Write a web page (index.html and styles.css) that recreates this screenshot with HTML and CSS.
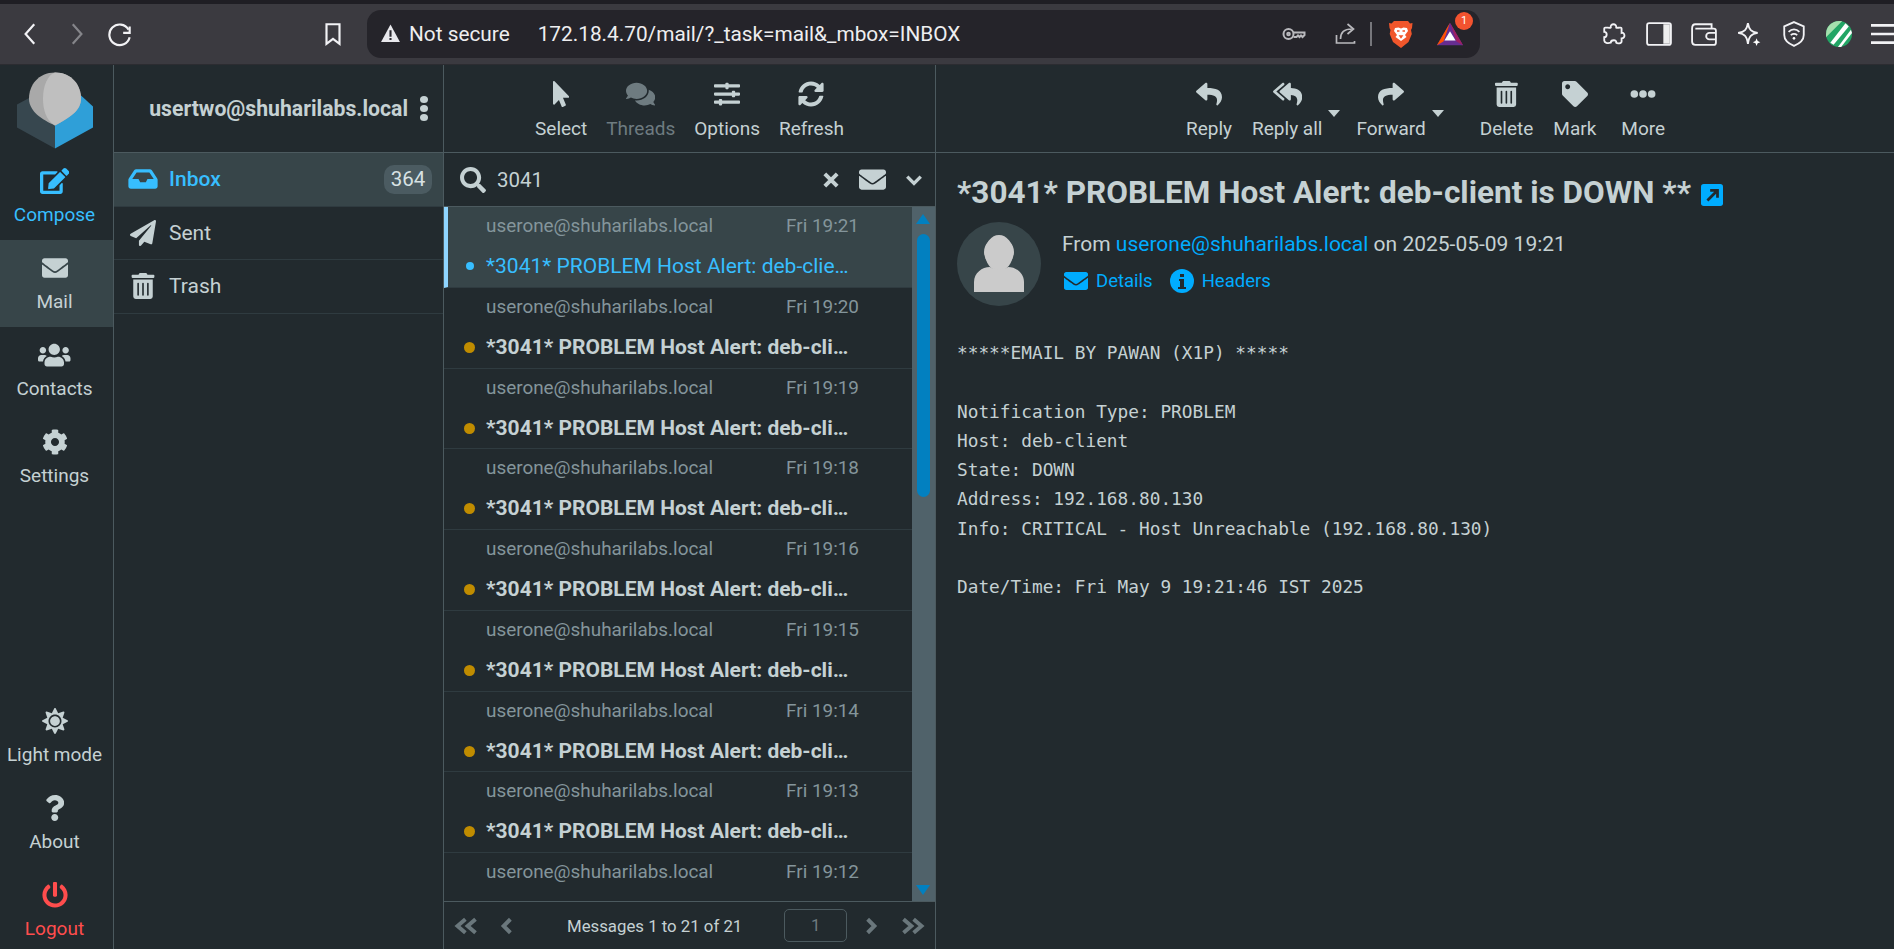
FILE: index.html
```html
<!DOCTYPE html>
<html>
<head>
  <meta charset="utf-8">
  <title>Roundcube Webmail :: *3041* PROBLEM Host Alert: deb-client is DOWN **</title>
  <link rel="stylesheet" href="styles.css">
</head>
<body>
  <svg class="defs" width="0" height="0">
    <defs>
      <path id="i-edit" d="M402.6 83.2l90.2 90.2c3.8 3.8 3.8 10 0 13.8L274.4 405.6l-92.8 10.3c-12.4 1.4-22.9-9.1-21.5-21.5l10.3-92.8L388.8 83.2c3.8-3.8 10-3.8 13.8 0zm162-22.9l-48.8-48.8c-15.2-15.2-39.9-15.2-55.2 0l-35.4 35.4c-3.8 3.8-3.8 10 0 13.8l90.2 90.2c3.8 3.8 10 3.8 13.8 0l35.4-35.4c15.2-15.3 15.2-40 0-55.2zM384 346.2V448H64V128h229.8c3.2 0 6.2-1.3 8.5-3.5l40-40c7.6-7.6 2.2-20.5-8.5-20.5H48C21.5 64 0 85.5 0 112v352c0 26.5 21.5 48 48 48h352c26.5 0 48-21.5 48-48V306.2c0-10.7-12.9-16-20.5-8.5l-40 40c-2.2 2.3-3.5 5.3-3.5 8.5z"/>
      <path id="i-env" d="M502.3 190.8c3.9-3.1 9.7-.2 9.7 4.7V400c0 26.5-21.5 48-48 48H48c-26.5 0-48-21.5-48-48V195.6c0-5 5.7-7.8 9.7-4.7 22.4 17.4 52.1 39.5 154.1 113.6 21.1 15.4 56.7 47.8 92.2 47.6 35.7.3 72-32.8 92.3-47.6 102-74.1 131.6-96.3 154-113.7zM256 320c23.2.4 56.6-29.2 73.4-41.4 132.7-96.3 142.8-104.7 173.4-128.7 5.8-4.5 9.2-11.5 9.2-18.9v-19c0-26.5-21.5-48-48-48H48C21.5 64 0 85.5 0 112v19c0 7.4 3.4 14.3 9.2 18.9 30.6 23.9 40.7 32.4 173.4 128.7 16.8 12.2 50.2 41.8 73.4 41.4z"/>
      <path id="i-users" d="M96 224c35.3 0 64-28.7 64-64s-28.7-64-64-64-64 28.7-64 64 28.7 64 64 64zm448 0c35.3 0 64-28.7 64-64s-28.7-64-64-64-64 28.7-64 64 28.7 64 64 64zm32 32h-64c-17.6 0-33.5 7.1-45.1 18.6 40.3 22.1 68.9 62 75.1 109.4h66c17.7 0 32-14.3 32-32v-32c0-35.3-28.7-64-64-64zm-256 0c61.9 0 112-50.1 112-112S381.9 32 320 32 208 82.1 208 144s50.1 112 112 112zm76.8 32h-8.3c-20.8 10-43.9 16-68.5 16s-47.6-6-68.5-16h-8.3C179.6 288 128 339.6 128 403.2V432c0 26.5 21.5 48 48 48h288c26.5 0 48-21.5 48-48v-28.8c0-63.6-51.6-115.2-115.2-115.2zm-223.7-13.4C161.5 263.1 145.6 256 128 256H64c-35.3 0-64 28.7-64 64v32c0 17.7 14.3 32 32 32h65.9c6.3-47.4 34.9-87.3 75.2-109.4z"/>
      <path id="i-cog" d="M487.4 315.7l-42.6-24.6c4.3-23.2 4.3-47 0-70.2l42.6-24.6c4.9-2.8 7.1-8.6 5.5-14-11.1-35.6-30-67.8-54.7-94.6-3.8-4.1-10-5.1-14.8-2.3L380.8 110c-17.9-15.4-38.5-27.3-60.8-35.1V25.8c0-5.6-3.9-10.5-9.4-11.7-36.7-8.2-74.3-7.8-109.2 0-5.5 1.2-9.4 6.1-9.4 11.7V75c-22.2 7.9-42.8 19.8-60.8 35.1L88.7 85.5c-4.9-2.8-11-1.9-14.8 2.3-24.7 26.7-43.6 58.9-54.7 94.6-1.7 5.4.6 11.2 5.5 14L67.3 221c-4.3 23.2-4.3 47 0 70.2l-42.6 24.6c-4.9 2.8-7.1 8.6-5.5 14 11.1 35.6 30 67.8 54.7 94.6 3.8 4.1 10 5.1 14.8 2.3l42.6-24.6c17.9 15.4 38.5 27.3 60.8 35.1v49.2c0 5.6 3.9 10.5 9.4 11.7 36.7 8.2 74.3 7.8 109.2 0 5.5-1.2 9.4-6.1 9.4-11.7v-49.2c22.2-7.9 42.8-19.8 60.8-35.1l42.6 24.6c4.9 2.8 11 1.9 14.8-2.3 24.7-26.7 43.6-58.9 54.7-94.6 1.5-5.5-.7-11.3-5.6-14.1zM256 336c-44.1 0-80-35.9-80-80s35.9-80 80-80 80 35.9 80 80-35.9 80-80 80z"/>
      <path id="i-sun" d="M256 160c-52.9 0-96 43.1-96 96s43.1 96 96 96 96-43.1 96-96-43.1-96-96-96zm246.4 80.5l-94.7-47.3 33.5-100.4c4.5-13.6-8.4-26.5-21.9-21.9l-100.4 33.5-47.4-94.8c-6.4-12.8-24.6-12.8-31 0l-47.3 94.7L92.7 70.8c-13.6-4.5-26.5 8.4-21.9 21.9l33.5 100.4-94.7 47.4c-12.8 6.4-12.8 24.6 0 31l94.7 47.3-33.5 100.5c-4.5 13.6 8.4 26.5 21.9 21.9l100.4-33.5 47.3 94.7c6.4 12.8 24.6 12.8 31 0l47.3-94.7 100.4 33.5c13.6 4.5 26.5-8.4 21.9-21.9l-33.5-100.4 94.7-47.3c13-6.5 13-24.7.2-31.1zm-155.9 106c-49.9 49.9-131.1 49.9-181 0-49.9-49.9-49.9-131.1 0-181 49.9-49.9 131.1-49.9 181 0 49.9 49.9 49.9 131.1 0 181z"/>
      <path id="i-question" d="M202.021 0C122.202 0 70.503 32.703 29.914 91.026c-7.363 10.58-5.093 25.086 5.178 32.874l43.138 32.709c10.373 7.865 25.132 6.026 33.253-4.148 25.049-31.381 43.63-49.449 82.757-49.449 30.764 0 68.816 19.799 68.816 49.631 0 22.552-18.617 34.134-48.993 51.164-35.423 19.86-82.299 44.576-82.299 106.405V320c0 13.255 10.745 24 24 24h72.471c13.255 0 24-10.745 24-24v-5.773c0-42.86 125.268-44.645 125.268-160.627C377.504 66.256 286.902 0 202.021 0zM192 373.459c-38.196 0-69.271 31.075-69.271 69.271 0 38.195 31.075 69.27 69.271 69.27s69.271-31.075 69.271-69.271-31.075-69.27-69.271-69.27z"/>
      <path id="i-power" d="M400 54.1c63 45 104 118.6 104 201.9 0 136.8-110.8 247.7-247.5 248C120 504.3 8.2 393 8 256.4 7.9 173.1 48.9 99.3 111.8 54.2c11.7-8.3 28-4.8 35 7.7L162.6 90c5.9 10.5 3.1 23.8-6.6 31-41.5 30.8-68 79.6-68 134.9-.1 92.3 74.5 168.1 168 168.1 91.6 0 168.6-74.2 168-169.1-.3-51.8-24.7-101.8-68.1-134-9.7-7.2-12.4-20.5-6.5-30.9l15.8-28.1c7-12.4 23.2-16.1 34.8-7.8zM296 264V24c0-13.3-10.7-24-24-24h-32c-13.3 0-24 10.7-24 24v240c0 13.3 10.7 24 24 24h32c13.3 0 24-10.7 24-24z"/>
      <path id="i-inbox" d="M567.938 243.908L462.25 85.374A48.003 48.003 0 0 0 422.311 64H153.689a48 48 0 0 0-39.938 21.374L8.062 243.908A47.994 47.994 0 0 0 0 270.533V400c0 26.51 21.49 48 48 48h480c26.51 0 48-21.49 48-48V270.533a47.994 47.994 0 0 0-8.062-26.625zM162.252 128h251.497l85.333 128H376l-32 64H232l-32-64H76.918l85.334-128z"/>
      <path id="i-plane" d="M476 3.2L12.5 270.6c-18.1 10.4-15.8 35.6 2.2 43.2L121 358.4l287.3-253.2c5.5-4.9 13.3 2.6 8.6 8.3L176 407v80.5c0 23.6 28.5 32.9 42.5 15.8L282 426l124.6 52.2c14.2 6 30.4-2.9 33-18.2l72-432C515 7.8 493.3-6.8 476 3.2z"/>
      <path id="i-trash" d="M32 464a48 48 0 0 0 48 48h288a48 48 0 0 0 48-48V128H32zm272-256a16 16 0 0 1 32 0v224a16 16 0 0 1-32 0zm-96 0a16 16 0 0 1 32 0v224a16 16 0 0 1-32 0zm-96 0a16 16 0 0 1 32 0v224a16 16 0 0 1-32 0zM432 32H312l-9.4-18.7A24 24 0 0 0 281.1 0H166.8a23.72 23.72 0 0 0-21.4 13.3L136 32H16A16 16 0 0 0 0 48v32a16 16 0 0 0 16 16h416a16 16 0 0 0 16-16V48a16 16 0 0 0-16-16z"/>
      <path id="i-pointer" d="M302.189 329.126H196.105l55.831 135.993c3.889 9.428-.555 19.999-9.444 23.999l-49.165 21.427c-9.165 4-19.443-.571-23.332-9.714l-53.053-129.136-86.664 89.138C18.729 472.71 0 463.554 0 447.977V18.299C0 1.899 19.921-6.096 30.277 5.443l284.412 292.542c11.472 11.179 3.007 31.141-12.5 31.141z"/>
      <path id="i-comments" d="M416 192c0-88.4-93.1-160-208-160S0 103.6 0 192c0 34.3 14.1 65.9 38 92-13.4 30.2-35.5 54.2-35.8 54.5-2.2 2.3-2.8 5.7-1.5 8.7S4.8 352 8 352c36.6 0 66.9-12.3 88.7-25 32.2 15.7 70.3 25 111.3 25 114.9 0 208-71.6 208-160zm122 220c23.9-26 38-57.7 38-92 0-66.9-53.5-124.2-129.3-148.1.9 6.6 1.3 13.3 1.3 20.1 0 105.9-107.7 192-240 192-10.8 0-21.3-.8-31.7-1.9C207.8 439.6 281.8 480 368 480c41 0 79.1-9.2 111.3-25 21.8 12.7 52.1 25 88.7 25 3.2 0 6.1-1.9 7.3-4.8 1.3-2.9.7-6.3-1.5-8.7-.3-.3-22.4-24.2-35.8-54.5z"/>
      <path id="i-sliders" d="M496 384H160v-16c0-8.8-7.2-16-16-16h-32c-8.8 0-16 7.2-16 16v16H16c-8.8 0-16 7.2-16 16v32c0 8.8 7.2 16 16 16h80v16c0 8.8 7.2 16 16 16h32c8.8 0 16-7.2 16-16v-16h336c8.8 0 16-7.2 16-16v-32c0-8.8-7.2-16-16-16zm0-160h-80v-16c0-8.8-7.2-16-16-16h-32c-8.8 0-16 7.2-16 16v16H16c-8.8 0-16 7.2-16 16v32c0 8.8 7.2 16 16 16h336v16c0 8.8 7.2 16 16 16h32c8.8 0 16-7.2 16-16v-16h80c8.8 0 16-7.2 16-16v-32c0-8.8-7.2-16-16-16zm0-160H288V48c0-8.8-7.2-16-16-16h-32c-8.8 0-16 7.2-16 16v16H16C7.2 64 0 71.2 0 80v32c0 8.8 7.2 16 16 16h208v16c0 8.8 7.2 16 16 16h32c8.8 0 16-7.2 16-16v-16h208c8.8 0 16-7.2 16-16V80c0-8.8-7.2-16-16-16z"/>
      <path id="i-sync" d="M370.72 133.28C339.458 104.008 298.888 87.962 255.848 88c-77.458.068-144.328 53.178-162.791 126.85-1.344 5.363-6.122 9.15-11.651 9.15H24.103c-7.498 0-13.194-6.807-11.807-14.176C33.933 94.924 134.813 8 256 8c66.448 0 126.791 26.136 171.315 68.685L463.03 40.97C478.149 25.851 504 36.559 504 57.941V192c0 13.255-10.745 24-24 24H345.941c-21.382 0-32.09-25.851-16.971-40.971l41.75-41.749zM32 296h134.059c21.382 0 32.09 25.851 16.971 40.971l-41.75 41.75c31.262 29.273 71.835 45.319 114.876 45.28 77.418-.07 144.315-53.144 162.787-126.849 1.344-5.363 6.122-9.15 11.651-9.15h57.304c7.498 0 13.194 6.807 11.807 14.176C478.067 417.076 377.187 504 256 504c-66.448 0-126.791-26.136-171.315-68.685L48.97 471.03C33.851 486.149 8 475.441 8 454.059V320c0-13.255 10.745-24 24-24z"/>
      <path id="i-reply" d="M8.309 189.836L184.313 37.851C199.719 24.546 224 35.347 224 56.015v80.053c160.629 1.839 288 34.032 288 186.258 0 61.441-39.581 122.309-83.333 154.132-13.653 9.931-33.111-2.533-28.077-18.631 45.344-145.012-21.507-183.51-176.59-185.742V360c0 20.7-24.3 31.453-39.687 18.164l-176.004-152c-11.071-9.562-11.086-26.753 0-36.328z"/>
      <path id="i-replyall" d="M136.309 189.836L312.313 37.851C327.72 24.546 352 35.348 352 56.015v82.763c129.182 10.231 224 52.212 224 183.548 0 61.441-39.582 122.309-83.333 154.132-13.653 9.931-33.111-2.533-28.077-18.631 38.512-123.162-3.922-169.482-112.59-182.015V360c0 20.7-24.3 31.453-39.687 18.164l-176.004-152c-11.071-9.562-11.086-26.753 0-36.328zM8.309 226.164l176.004 152c15.387 13.289 39.687 2.536 39.687-18.164v-15.581L66.4 208 224 71.6V56.015c0-20.667-24.281-31.469-39.687-18.164L8.309 189.836c-11.086 9.575-11.071 26.766 0 36.328z"/>
      <path id="i-tag" d="M0 252.118V48C0 21.49 21.49 0 48 0h204.118a48 48 0 0 1 33.941 14.059l211.882 211.882c18.745 18.745 18.745 49.137 0 67.882L293.823 497.941c-18.745 18.745-49.137 18.745-67.882 0L14.059 286.059A48 48 0 0 1 0 252.118zM112 64c-26.51 0-48 21.49-48 48s21.49 48 48 48 48-21.49 48-48-21.49-48-48-48z"/>
      <path id="i-search" d="M505 442.7L405.3 343c-4.5-4.5-10.6-7-17-7H372c27.6-35.3 44-79.7 44-128C416 93.1 322.9 0 208 0S0 93.1 0 208s93.1 208 208 208c48.3 0 92.7-16.4 128-44v16.3c0 6.4 2.5 12.5 7 17l99.7 99.7c9.4 9.4 24.6 9.4 33.9 0l28.3-28.3c9.4-9.4 9.4-24.6.1-34zM208 336c-70.7 0-128-57.2-128-128 0-70.7 57.2-128 128-128 70.7 0 128 57.2 128 128 0 70.7-57.2 128-128 128z"/>
    </defs>
  </svg>

  <header class="browser">
    <div class="browser-bar">
      <div class="nav-arrows">
        <svg class="bi" viewBox="0 0 24 24"><path d="M15 3L7 12l8 9"/></svg>
        <svg class="bi dim" viewBox="0 0 24 24"><path d="M9 3l8 9-8 9"/></svg>
        <svg class="bi" viewBox="0 0 24 24"><path d="M19 8a9.500 9.500 0 1 0 1 7"/><path d="M20 5v6h-6" class="thin"/></svg>
      </div>
      <svg class="bi bookmark" viewBox="0 0 24 24"><path d="M6 3h12v18l-6-4.500L6 21z"/></svg>
      <div class="address">
        <svg class="warn" viewBox="0 0 20 20"><path d="M10 1.500l9 16.500H1z" fill="#e8e8ec"/><path d="M9 7h2v6H9zM9 14.200h2v2H9z" fill="#2a292f"/></svg>
        <span class="not-secure">Not secure</span>
        <span class="url">172.18.4.70/mail/?_task=mail&amp;_mbox=INBOX</span>
        <div class="address-end">
          <svg class="bi small key" viewBox="0 0 24 24"><circle cx="7" cy="12" r="5"/><circle cx="7" cy="12" r="1.300"/><path d="M12 10.500h11v2.500l-2 2-1.500-1.500-1.500 1.500-1.500-1.500-1.500 1.500H12"/></svg>
          <svg class="bi small share" viewBox="0 0 24 24"><path d="M2 13v8h18v-2M6 17c0-7 4-10 11-10M13 2l6 5-6 5"/></svg>
          <span class="addr-sep"></span>
          <svg class="brave" viewBox="0 0 24 28"><path d="M5 1h14l2 2.500 2.500-.5-.5 5-1 2 .8 4-3.300 8L12 28 4 22l-3.300-8 .8-4-1-2L0 3l2.500.5z" fill="#f1562b"/><path d="M6 8l3.500-.5L12 8.500l2.500-1L18 8l1 3-3 4 1.500 2L12 21l-5.500-4L8 15l-3-4z" fill="#fff"/><path d="M8 11h2.500M13.500 11H16M11 16h2l-1 1.500z" stroke="#f1562b" stroke-width="1.500" fill="#f1562b"/></svg>
          <div class="bat">
            <svg viewBox="0 0 30 28"><path d="M15 2l14 24H1z" fill="#662d91"/><path d="M15 2L1 26l7-4z" fill="#ff5000"/><path d="M15 2l14 24-7-4z" fill="#9e1f63"/><path d="M15 11l6 10H9z" fill="#fff"/></svg>
            <span class="bat-badge">1</span>
          </div>
        </div>
      </div>
      <div class="extensions">
        <svg class="bi ext" viewBox="0 0 24 24"><path d="M9 6c-1-4 6-4 5 0 0 1 5-1 5 1v4c3-1 4 5 0 5v3c0 2-4 2-5 1 1-3-5-3-5 0-3 1-6 0-6-2v-3c3 0 3-5 0-5V7c0-2 5 0 6-1z"/></svg>
        <svg class="bi ext" viewBox="0 0 24 24"><rect x="1" y="2" width="22" height="20" rx="2"/><path d="M16 3h6v18h-6z" fill="#eee" stroke="none"/></svg>
        <svg class="bi ext" viewBox="0 0 24 24"><path d="M1 7c0-2 1-4 3-4h15v4M1 7v12c0 2 1 3 3 3h17c1 0 2-1 2-2V9c0-1-1-2-2-2H4M23 11h-6a3 3 0 0 0 0 6h6"/></svg>
        <svg class="bi ext" viewBox="0 0 24 24"><path d="M11 2c1 6 3 8 9 9-6 1-8 3-9 10-1-7-3-9-9-10 6-1 8-3 9-9z"/><path d="M19 16l1 2.500 2.500 1-2.500 1-1 2.500-1-2.500-2.500-1 2.500-1z" fill="#fff" stroke="none"/></svg>
        <svg class="bi ext" viewBox="0 0 24 24"><path d="M12 1l9 4v8c0 5-4 8-9 10-5-2-9-5-9-10V5z"/><path d="M7 10c3-3 7-3 10 0M9 13c2-1.500 4-1.500 6 0" stroke-width="1.600"/><circle cx="12" cy="16" r="1.200" fill="#fff" stroke="none"/></svg>
        <svg class="ext" viewBox="0 0 24 24"><circle cx="12" cy="12" r="12" fill="#22a565"/><path d="M0 12A12 12 0 0 1 12 0h3L0 15z" fill="#a5e0ae"/><path d="M18 2L4 20l3 2L21 5z" fill="#fff"/><path d="M23 8L11 24h3L24 11z" fill="#fff"/></svg>
        <svg class="bi ext menu" viewBox="0 0 24 24"><path d="M0 4h24M0 12h24M0 20h24"/></svg>
      </div>
    </div>
  </header>

  <main class="app">
    <nav class="side">
      <svg class="logo" viewBox="0 0 113 87">
        <path d="M17 39l26-14 12 35v23L17 62z" fill="#37474f"/>
        <path d="M55 60l26-30 12 11v21L55 83z" fill="#2f9fd8"/>
        <path d="M55 7c17 0 26 13 26 26 0 12-11 19-26 27-13-6-26-14-26-27C29 20 38 7 55 7z" fill="#a9a9a9"/>
        <path d="M55 7c17 0 26 13 26 26 0 12-11 19-26 27-9-5-12-16-12-27C43 20 48 9 55 7z" fill="#bfbfbf"/>
      </svg>
      <a class="side-item compose"><svg class="ic" viewBox="0 0 576 512"><use href="#i-edit"/></svg><span>Compose</span></a>
      <a class="side-item current"><svg class="ic" viewBox="0 0 512 512"><use href="#i-env"/></svg><span>Mail</span></a>
      <a class="side-item"><svg class="ic" viewBox="0 0 640 512"><use href="#i-users"/></svg><span>Contacts</span></a>
      <a class="side-item"><svg class="ic" viewBox="0 0 512 512"><use href="#i-cog"/></svg><span>Settings</span></a>
      <div class="side-bottom">
        <a class="side-item"><svg class="ic" viewBox="0 0 512 512"><use href="#i-sun"/></svg><span>Light mode</span></a>
        <a class="side-item"><svg class="ic" viewBox="0 0 384 512"><use href="#i-question"/></svg><span>About</span></a>
        <a class="side-item logout"><svg class="ic" viewBox="0 0 512 512"><use href="#i-power"/></svg><span>Logout</span></a>
      </div>
    </nav>

    <section class="folders">
      <div class="account">
        <span class="account-name">usertwo@shuharilabs.local</span>
        <span class="kebab"><i></i><i></i><i></i></span>
      </div>
      <ul class="folder-list">
        <li class="folder selected"><svg class="ic" viewBox="0 0 576 512"><use href="#i-inbox"/></svg><span class="folder-name">Inbox</span><span class="count">364</span></li>
        <li class="folder"><svg class="ic" viewBox="0 0 512 512"><use href="#i-plane"/></svg><span class="folder-name">Sent</span></li>
        <li class="folder"><svg class="ic" viewBox="0 0 448 512"><use href="#i-trash"/></svg><span class="folder-name">Trash</span></li>
      </ul>
    </section>

    <section class="messages">
      <div class="toolbar list-toolbar">
        <a class="tbtn"><svg class="ic" viewBox="0 0 320 512"><use href="#i-pointer"/></svg><span>Select</span></a>
        <a class="tbtn disabled"><svg class="ic" viewBox="0 0 576 512"><use href="#i-comments"/></svg><span>Threads</span></a>
        <a class="tbtn"><svg class="ic" viewBox="0 0 512 512"><use href="#i-sliders"/></svg><span>Options</span></a>
        <a class="tbtn"><svg class="ic" viewBox="0 0 512 512"><use href="#i-sync"/></svg><span>Refresh</span></a>
      </div>
      <div class="searchbar">
        <svg class="ic search-ic" viewBox="0 0 512 512"><use href="#i-search"/></svg>
        <span class="search-text">3041</span>
        <svg class="bi x-ic" viewBox="0 0 16 16"><path d="M2.500 2.500l11 11M13.500 2.500l-11 11"/></svg>
        <svg class="ic env-ic" viewBox="0 0 512 512"><use href="#i-env"/></svg>
        <svg class="bi chev-ic" viewBox="0 0 16 16"><path d="M2 5l6 6 6-6"/></svg>
      </div>
      <div class="list-wrap">
        <ul class="list">
          <li class="msg selected"><div class="msg-top"><span class="sender">userone@shuharilabs.local</span><span class="date">Fri 19:21</span></div><div class="msg-sub"><i class="dot small-dot"></i><span class="subject">*3041* PROBLEM Host Alert: deb-clie…</span></div></li>
          <li class="msg unread"><div class="msg-top"><span class="sender">userone@shuharilabs.local</span><span class="date">Fri 19:20</span></div><div class="msg-sub"><i class="dot"></i><span class="subject">*3041* PROBLEM Host Alert: deb-cli…</span></div></li>
          <li class="msg unread"><div class="msg-top"><span class="sender">userone@shuharilabs.local</span><span class="date">Fri 19:19</span></div><div class="msg-sub"><i class="dot"></i><span class="subject">*3041* PROBLEM Host Alert: deb-cli…</span></div></li>
          <li class="msg unread"><div class="msg-top"><span class="sender">userone@shuharilabs.local</span><span class="date">Fri 19:18</span></div><div class="msg-sub"><i class="dot"></i><span class="subject">*3041* PROBLEM Host Alert: deb-cli…</span></div></li>
          <li class="msg unread"><div class="msg-top"><span class="sender">userone@shuharilabs.local</span><span class="date">Fri 19:16</span></div><div class="msg-sub"><i class="dot"></i><span class="subject">*3041* PROBLEM Host Alert: deb-cli…</span></div></li>
          <li class="msg unread"><div class="msg-top"><span class="sender">userone@shuharilabs.local</span><span class="date">Fri 19:15</span></div><div class="msg-sub"><i class="dot"></i><span class="subject">*3041* PROBLEM Host Alert: deb-cli…</span></div></li>
          <li class="msg unread"><div class="msg-top"><span class="sender">userone@shuharilabs.local</span><span class="date">Fri 19:14</span></div><div class="msg-sub"><i class="dot"></i><span class="subject">*3041* PROBLEM Host Alert: deb-cli…</span></div></li>
          <li class="msg unread"><div class="msg-top"><span class="sender">userone@shuharilabs.local</span><span class="date">Fri 19:13</span></div><div class="msg-sub"><i class="dot"></i><span class="subject">*3041* PROBLEM Host Alert: deb-cli…</span></div></li>
          <li class="msg unread"><div class="msg-top"><span class="sender">userone@shuharilabs.local</span><span class="date">Fri 19:12</span></div></li>
        </ul>
        <div class="scroll">
          <span class="arrow-up"></span>
          <span class="thumb"></span>
          <span class="arrow-down"></span>
        </div>
      </div>
      <div class="pager">
        <svg class="bi pg first" viewBox="0 0 24 16"><path d="M11 2L4 8l7 6M20 2l-7 6 7 6"/></svg>
        <svg class="bi pg prev" viewBox="0 0 12 16"><path d="M9 2L3 8l6 6"/></svg>
        <span class="pager-text">Messages 1 to 21 of 21</span>
        <span class="page-input">1</span>
        <svg class="bi pg next" viewBox="0 0 12 16"><path d="M3 2l6 6-6 6"/></svg>
        <svg class="bi pg last" viewBox="0 0 24 16"><path d="M4 2l7 6-7 6M13 2l7 6-7 6"/></svg>
      </div>
    </section>

    <section class="reader">
      <div class="toolbar reader-toolbar">
        <a class="tbtn"><svg class="ic" viewBox="0 0 512 512"><use href="#i-reply"/></svg><span>Reply</span></a>
        <a class="tbtn"><svg class="ic" viewBox="0 0 576 512"><use href="#i-replyall"/></svg><span>Reply all</span></a>
        <span class="caret"></span>
        <a class="tbtn"><svg class="ic flip" viewBox="0 0 512 512"><use href="#i-reply"/></svg><span>Forward</span></a>
        <span class="caret wide"></span>
        <a class="tbtn"><svg class="ic" viewBox="0 0 448 512"><use href="#i-trash"/></svg><span>Delete</span></a>
        <a class="tbtn"><svg class="ic" viewBox="0 0 512 512"><use href="#i-tag"/></svg><span>Mark</span></a>
        <a class="tbtn more"><svg class="ic" viewBox="0 0 24 24"><circle cx="4" cy="12" r="3.500"/><circle cx="12" cy="12" r="3.500"/><circle cx="20" cy="12" r="3.500"/></svg><span>More</span></a>
      </div>
      <article class="mail">
        <h1 class="mail-title">*3041* PROBLEM Host Alert: deb-client is DOWN **
          <svg class="open-ext" viewBox="0 0 24 24"><rect width="24" height="24" rx="3" fill="#00acff"/><path d="M7 18L17 8M10 7h8v8" stroke="#222a2e" stroke-width="3" fill="none"/></svg>
        </h1>
        <div class="mail-head">
          <div class="avatar">
            <svg viewBox="0 0 84 84"><circle cx="42" cy="30" r="15" fill="#cbcbcb"/><ellipse cx="42" cy="31" rx="14" ry="18" fill="#cbcbcb"/><path d="M17 70V60c0-9 8-15 16-15 3 3 15 3 18 0 8 0 16 6 16 15v10z" fill="#cbcbcb"/></svg>
          </div>
          <div class="head-text">
            <p class="from">From <a>userone@shuharilabs.local</a> on 2025-05-09 19:21</p>
            <p class="head-links">
              <a class="head-link"><svg viewBox="0 0 512 512"><use href="#i-env"/></svg>Details</a>
              <a class="head-link"><svg viewBox="0 0 24 24"><circle cx="12" cy="12" r="12"/><path d="M10 5h4v3h-4zM9 10h5v8h2v2H8v-2h2v-6H9z" fill="#222a2e"/></svg>Headers</a>
            </p>
          </div>
        </div>
        <pre class="mail-body">*****EMAIL BY PAWAN (X1P) *****

Notification Type: PROBLEM
Host: deb-client
State: DOWN
Address: 192.168.80.130
Info: CRITICAL - Host Unreachable (192.168.80.130)

Date/Time: Fri May 9 19:21:46 IST 2025</pre>
      </article>
    </section>
  </main>
</body>
</html>
```

FILE: styles.css
```css
* {
  box-sizing: border-box;
}
html, body {
  height: 100%;
}
body {
  margin: 0;
  display: flex;
  flex-direction: column;
  overflow: hidden;
  background: #222a2e;
  color: #c5d1d3;
  font-family: Roboto, "Liberation Sans", sans-serif;
  font-size: 18px;
}
ul {
  list-style: none;
  margin: 0;
  padding: 0;
}
.defs {
  position: absolute;
}

/* browser chrome */
.browser {
  height: 65px;
  flex: none;
  padding-top: 4px;
  background: #1f1e24;
}
.browser-bar {
  height: 61px;
  display: flex;
  align-items: center;
  overflow: hidden;
  background: #3b3a40;
  border-bottom: 1px solid #2c2c31;
  padding-bottom: 1px;
}
.bi {
  fill: none;
  stroke: #f2f2f5;
  stroke-width: 2;
  flex: none;
}
.nav-arrows {
  display: flex;
  align-items: center;
  gap: 19px;
  margin-left: 18px;
  flex: none;
}
.nav-arrows .bi {
  width: 26px;
  height: 26px;
}
.bi.dim {
  stroke: #85858a;
}
.bi.bookmark {
  width: 26px;
  height: 28px;
  margin-left: 186px;
}
.address {
  width: 1113px;
  height: 48px;
  flex: none;
  margin-left: 21px;
  padding: 0 14px 0 13px;
  display: flex;
  align-items: center;
  background: #25242a;
  border-radius: 14px;
  color: #eeeef0;
  font-size: 20.800px;
}
.warn {
  width: 21px;
  height: 21px;
  flex: none;
}
.not-secure {
  margin-left: 8px;
}
.url {
  margin-left: 28px;
}
.address-end {
  margin-left: auto;
  display: flex;
  align-items: center;
}
.bi.small {
  width: 25px;
  height: 24px;
  stroke: #b9b9bd;
  stroke-width: 1.700;
}
.bi.key {
  stroke-width: 2;
}
.bi.share {
  margin-left: 28px;
}
.addr-sep {
  width: 2px;
  height: 24px;
  margin-left: 11px;
  background: #77777c;
}
.brave {
  width: 24px;
  height: 28px;
  margin-left: 17px;
}
.bat {
  position: relative;
  width: 30px;
  height: 28px;
  margin-left: 23px;
}
.bat svg {
  width: 28px;
  height: 28px;
}
.bat-badge {
  position: absolute;
  top: -8px;
  right: -7px;
  width: 18px;
  height: 18px;
  border-radius: 50%;
  background: #f3532f;
  color: #fff;
  font-size: 11px;
  line-height: 18px;
  text-align: center;
}
.extensions {
  display: flex;
  align-items: center;
  gap: 19px;
  margin-left: 121px;
  flex: none;
}
.ext {
  width: 26px;
  height: 26px;
  flex: none;
}
.bi.ext {
  stroke-width: 1.700;
}
.bi.menu {
  stroke-width: 2.400;
}

/* app columns */
.app {
  flex: 1;
  display: flex;
  min-height: 0;
  background: #222a2e;
}
.ic {
  height: 26px;
  width: auto;
  display: block;
  fill: currentColor;
  flex: none;
}
.side {
  width: 114px;
  flex: none;
  display: flex;
  flex-direction: column;
  border-right: 1px solid #4c5a5f;
}
.logo {
  width: 113px;
  height: 88px;
  flex: none;
}
.side-item,
.tbtn {
  display: flex;
  flex-direction: column;
  align-items: center;
  white-space: nowrap;
}
.side-item {
  height: 87px;
  flex: none;
  padding: 15px 4px 0 0;
  font-size: 19px;
  line-height: 22px;
}
.tbtn {
  padding-top: 16px;
}
.side-item .ic {
  margin-bottom: 10px;
}
.tbtn .ic {
  margin-bottom: 11px;
}
.side-item.compose {
  color: #37beff;
}
.side-item.current {
  background: #374549;
}
.side-item.logout {
  color: #ff4d4d;
}
.side-bottom {
  margin-top: auto;
  margin-bottom: -5px;
}

.folders {
  width: 330px;
  flex: none;
  border-right: 1px solid #4c5a5f;
}
.account {
  height: 88px;
  display: flex;
  align-items: center;
  justify-content: flex-end;
  padding: 0 15px 0 0;
  border-bottom: 1px solid #4c5a5f;
  font-size: 21.200px;
  font-weight: 700;
}
.kebab {
  display: flex;
  flex-direction: column;
  gap: 2px;
  margin-left: 12px;
}
.kebab i {
  width: 8px;
  height: 7px;
  border-radius: 50%;
  background: #c5d1d3;
}
.folder {
  height: 53.500px;
  display: flex;
  align-items: center;
  padding: 0 11px 0 14px;
  border-bottom: 1px solid #2f3b40;
  font-size: 21px;
}
.folder .ic {
  width: 30px;
}
.folder-name {
  margin-left: 11px;
}
.folder.selected {
  background: #374549;
  color: #37beff;
  font-weight: 500;
}
.count {
  margin-left: auto;
  width: 48px;
  height: 29px;
  border-radius: 10px;
  background: #4b5b61;
  color: #d8e2e4;
  font-weight: 400;
  font-size: 20.500px;
  line-height: 29px;
  text-align: center;
}

.messages {
  width: 492px;
  flex: none;
  display: flex;
  flex-direction: column;
  border-right: 1px solid #4c5a5f;
}
.toolbar {
  height: 88px;
  flex: none;
  display: flex;
  border-bottom: 1px solid #4c5a5f;
  font-size: 19px;
  line-height: 22px;
}
.list-toolbar {
  justify-content: center;
  gap: 19px;
}
.tbtn.disabled {
  color: #6e7b80;
}
.searchbar {
  height: 54px;
  flex: none;
  display: flex;
  align-items: center;
  padding: 0 12px 0 16px;
  border-bottom: 1px solid #4c5a5f;
  font-size: 20.500px;
}
.search-ic {
  height: 26px;
}
.search-text {
  margin-left: 11px;
}
.x-ic {
  width: 18px;
  height: 18px;
  margin-left: auto;
  stroke: #c5d1d3;
  stroke-width: 3.500;
}
.env-ic {
  height: 27px;
  margin-left: 19px;
}
.chev-ic {
  width: 18px;
  height: 18px;
  margin-left: 19px;
  stroke: #c5d1d3;
  stroke-width: 3;
}
.list-wrap {
  flex: 1;
  min-height: 0;
  display: flex;
  overflow: hidden;
}
.list {
  flex: 1;
  min-width: 0;
}
.msg {
  height: 80.750px;
  padding-left: 42px;
  border-bottom: 1px solid #2f3b40;
  border-left: 0 solid #8fd5ff;
}
.msg-top {
  height: 37px;
  display: flex;
  align-items: center;
  padding-right: 53px;
  color: #84959b;
  font-size: 18.900px;
}
.date {
  margin-left: auto;
}
.msg-sub {
  position: relative;
  height: 44px;
  display: flex;
  align-items: center;
  font-size: 21px;
}
.subject {
  white-space: nowrap;
}
.dot {
  position: absolute;
  left: -22px;
  top: 17px;
  width: 11px;
  height: 11px;
  border-radius: 50%;
  background: #c08c00;
}
.msg.unread .subject {
  font-weight: 700;
}
.msg.selected {
  background: #374549;
  border-left-width: 4px;
  padding-left: 38px;
  color: #37beff;
}
.msg.selected .msg-top {
  color: #84959b;
}
.dot.small-dot {
  background: #37beff;
  width: 8px;
  height: 8px;
  left: -20px;
  top: 18px;
}
.scroll {
  position: relative;
  width: 23px;
  flex: none;
  background: #50626a;
}
.thumb {
  position: absolute;
  top: 27px;
  left: 5px;
  width: 13px;
  height: 263px;
  border-radius: 7px;
  background: #0280c0;
}
.arrow-up,
.arrow-down {
  position: absolute;
  left: 4px;
  width: 0;
  height: 0;
  border-left: 7px solid transparent;
  border-right: 7px solid transparent;
}
.arrow-up {
  top: 7px;
  border-bottom: 10px solid #0280c0;
}
.arrow-down {
  bottom: 6px;
  border-top: 10px solid #0280c0;
}
.pager {
  height: 48px;
  flex: none;
  display: flex;
  align-items: center;
  border-top: 1px solid #4c5a5f;
  padding-left: 9px;
  font-size: 16.800px;
}
.bi.pg {
  height: 18px;
  stroke: #6a777c;
  stroke-width: 3.500;
}
.pg.first,
.pg.last {
  width: 27px;
}
.pg.prev,
.pg.next {
  width: 14px;
}
.pg.prev {
  margin-left: 20px;
}
.pager-text {
  margin-left: 53px;
}
.page-input {
  width: 63px;
  height: 33px;
  margin-left: 42px;
  border: 1px solid #4c5a5f;
  border-radius: 5px;
  color: #6e7b80;
  line-height: 31px;
  text-align: center;
}
.pg.next {
  margin-left: 17px;
}
.pg.last {
  margin-left: 21px;
}

.reader {
  flex: 1;
  min-width: 0;
}
.reader-toolbar {
  padding-left: 250px;
  gap: 20px;
}
.caret {
  width: 0;
  height: 0;
  margin: 45px -4px 0 -14px;
  border-left: 6px solid transparent;
  border-right: 6px solid transparent;
  border-top: 7px solid #c5d1d3;
  align-self: flex-start;
}
.caret.wide {
  margin-right: 16px;
}
.tbtn.more {
  margin-left: 5px;
}
.flip {
  transform: scaleX(-1);
}
.mail {
  padding: 22px 21px;
}
.mail-title {
  margin: 0;
  display: flex;
  align-items: center;
  gap: 10px;
  font-size: 31.500px;
  font-weight: 700;
  line-height: 36px;
}
.open-ext {
  width: 22px;
  height: 22px;
  margin-top: 3px;
}
.mail-head {
  display: flex;
  margin-top: 11px;
}
.avatar {
  width: 84px;
  height: 84px;
  flex: none;
  border-radius: 50%;
  background: #374549;
}
.avatar svg {
  display: block;
}
.head-text {
  margin-left: 21px;
}
.from {
  margin: 6px 0 0;
  font-size: 21px;
  line-height: 32px;
}
.from a,
.head-link {
  color: #00acff;
}
.head-links {
  margin: 9px 0 0;
  padding-left: 2px;
  display: flex;
  gap: 17px;
  font-size: 18.500px;
  line-height: 24px;
}
.head-link {
  display: flex;
  align-items: center;
  gap: 8px;
}
.head-link svg {
  width: 24px;
  height: 24px;
  fill: currentColor;
}
.mail-body {
  margin: 32px 0 0;
  font-family: "DejaVu Sans Mono", monospace;
  font-size: 17.800px;
  line-height: 29.300px;
}
```
